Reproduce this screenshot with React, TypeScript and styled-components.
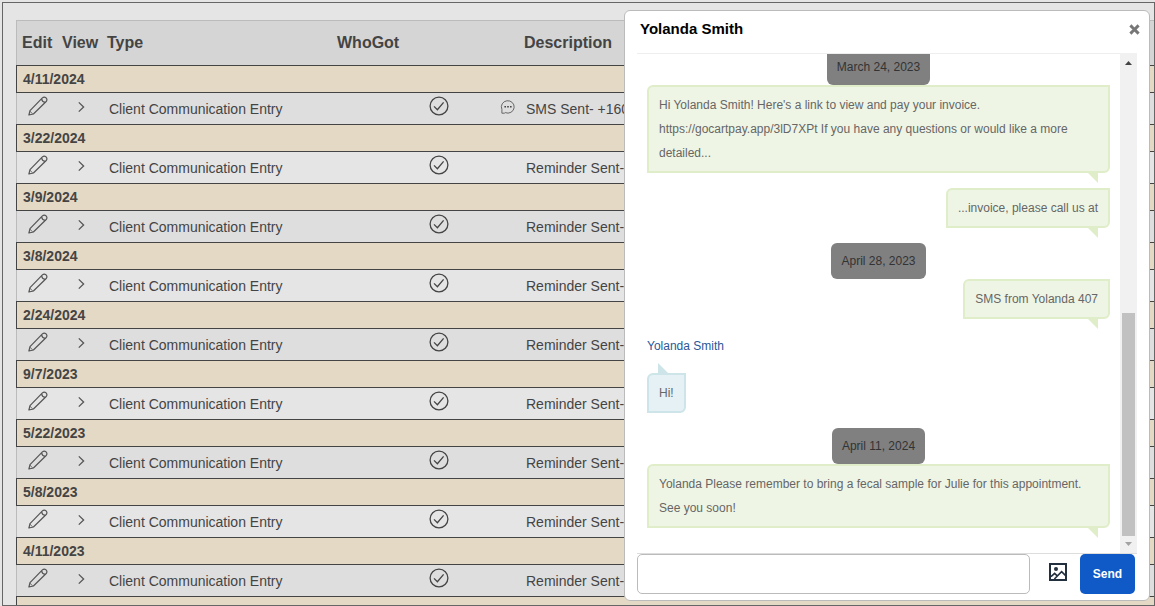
import React from "react";
import styled, { createGlobalStyle } from "styled-components";

const GlobalStyle = createGlobalStyle`
  *, *::before, *::after { box-sizing: border-box; }
  html, body { margin: 0; padding: 0; }
  body {
    background: #e5e5e5;
    color: #444;
    font-family: "Liberation Sans", Arial, sans-serif;
    font-size: 14px;
    overflow: hidden;
  }
  button, input { font-family: inherit; }
`;

const Page = styled.div`
  display: flex;
  height: 100vh;
  padding: 2px 0 0 2px;
`;

const Frame = styled.main`
  flex: 1;
  min-width: 0;
  overflow: hidden;
  border: 1px solid #666;
  padding: 17px 0 0 13px;
`;

const HistoryTable = styled.table`
  width: 100%;
  table-layout: fixed;
  border-collapse: separate;
  border-spacing: 0;
`;

const Column = styled.col<{ $width?: number }>`
  width: ${(p) => (p.$width ? `${p.$width}px` : "auto")};
`;

const HeadCell = styled.th`
  height: 45px;
  padding: 0 5px;
  border-top: 1px solid #bbb;
  background: #d5d5d5;
  font-size: 16px;
  line-height: 20px;
  text-align: left;
  white-space: nowrap;

  &:first-child { border-left: 1px solid #bbb; }
`;

const DateCell = styled.th`
  height: 28px;
  padding: 0 6px;
  border: 1px solid #444;
  border-right: 0;
  background: #e4d9c4;
  font-size: 14px;
  line-height: 16px;
  text-align: left;
`;

const EntryRow = styled.tr<{ $shaded: boolean }>`
  background: ${(p) => (p.$shaded ? "#dedede" : "#e5e5e5")};
`;

const EntryCell = styled.td`
  height: 31px;
  padding: 1px 7px 0;
  line-height: 16px;
  white-space: nowrap;
  overflow: hidden;
`;

const IconCell = styled.td<{ $align?: string; $pad?: string }>`
  height: 31px;
  padding: ${(p) => p.$pad ?? "3px 0 0"};
  line-height: 0;
  text-align: ${(p) => p.$align ?? "center"};
  vertical-align: top;

  &:first-child { border-left: 1px solid #bbb; }
`;

const IconButton = styled.button`
  padding: 0;
  border: 0;
  background: none;
  color: inherit;
  line-height: 0;
  cursor: pointer;
`;

const Dialog = styled.section`
  position: fixed;
  top: 10px;
  right: 5px;
  bottom: 5px;
  width: 526px;
  max-width: calc(100vw - 10px);
  display: flex;
  flex-direction: column;
  padding: 0 12px 6px;
  border: 1px solid #bbb;
  border-radius: 6px;
  background: #fff;
  font-size: 12px;
`;

const DialogHeader = styled.header`
  display: flex;
  align-items: center;
  justify-content: space-between;
  height: 42px;
  padding: 0 0 6px 3px;
  margin-right: -3px;
`;

const DialogTitle = styled.h2`
  margin: 0;
  color: #000;
  font-size: 15px;
  line-height: 20px;
`;

const Conversation = styled.div`
  flex: 1;
  min-height: 0;
  display: flex;
  border-top: 1px solid #eee;
  border-bottom: 1px solid #ddd;
`;

const Messages = styled.div`
  flex: 1;
  min-width: 0;
  overflow: hidden;
  display: flex;
  flex-direction: column;
  justify-content: flex-end;
  align-items: flex-end;
  padding: 0 10px 10px;
  color: #666;
  line-height: 24px;
`;

const DayPill = styled.div`
  flex: none;
  align-self: center;
  padding: 6px 10px;
  border-radius: 6px;
  background: #808080;
  color: #333;
`;

const Bubble = styled.div<{ $incoming?: boolean }>`
  flex: none;
  position: relative;
  align-self: ${(p) => (p.$incoming ? "flex-start" : "flex-end")};
  margin-bottom: 15px;
  padding: 6px 10px;
  border: 2px solid ${(p) => (p.$incoming ? "#cde4e8" : "#dfedc9")};
  border-radius: 6px 0;
  background: ${(p) => (p.$incoming ? "#e5f1f4" : "#eff5e5")};

  &::after {
    content: "";
    position: absolute;
    width: 10px;
    height: 10px;
    background: ${(p) => (p.$incoming ? "#cde4e8" : "#dfedc9")};
    ${(p) =>
      p.$incoming
        ? "left: 9px; top: -12px; clip-path: polygon(0 0, 100% 100%, 0 100%);"
        : "right: 10px; bottom: -12px; clip-path: polygon(0 0, 100% 0, 100% 100%);"}
  }
`;

const Sender = styled.div`
  flex: none;
  align-self: flex-start;
  margin-bottom: 15px;
  color: #2b5797;
`;

const ScrollTrack = styled.div`
  width: 17px;
  margin-top: -1px;
  display: flex;
  flex-direction: column;
  align-items: center;
  background: #f1f1f1;
`;

const ScrollArrow = styled.svg`
  flex: none;
  width: 17px;
  height: 17px;
`;

const ScrollSpace = styled.div`
  flex: 243;
`;

const ScrollThumb = styled.div`
  flex: 223;
  width: 13px;
  background: #c1c1c1;
`;

const Composer = styled.form`
  display: flex;
  align-items: center;
  height: 40px;
  padding-right: 2px;
`;

const MessageInput = styled.input`
  flex: 1;
  min-width: 0;
  height: 40px;
  margin-right: 19px;
  padding: 0 10px;
  border: 1px solid #bbb;
  border-radius: 5px;
  background: #fff;
  font-size: 12px;
`;

const AttachButton = styled(IconButton)`
  margin-bottom: 4px;
`;

const SendButton = styled.button`
  width: 55px;
  height: 40px;
  margin-left: 13px;
  padding: 0;
  border: 0;
  border-radius: 5px;
  background: #0f5ac6;
  color: #fff;
  font-size: 12px;
  font-weight: bold;
  cursor: pointer;
`;

const PencilIcon = () => (
  <svg width="20" height="20" viewBox="0 0 20 20" fill="none" stroke="#555" strokeWidth="1.2" strokeLinejoin="round">
    <path d="M0.9 19 L2 14.6 L14.4 1.9 Q16.2 0.3 18.1 1.9 Q19.7 3.8 18.2 5.5 L5.4 18 Z" />
    <path d="M13.6 2.8 Q14 5.8 17.2 6.4" />
    <path d="M1.9 15.2 L4.8 18" strokeWidth="0.8" />
  </svg>
);

const ChevronIcon = () => (
  <svg width="8" height="12" viewBox="0 0 8 12" fill="none" stroke="#555" strokeWidth="1.3">
    <path d="M0.8 1.4 L5.6 6 L0.8 10.6" />
  </svg>
);

const CheckIcon = () => (
  <svg width="20" height="20" viewBox="0 0 20 20" fill="none" stroke="#444" strokeWidth="1.3">
    <circle cx="10" cy="10" r="8.9" />
    <path d="M5 10.4 L8.4 13.7 L14.6 6.3" />
  </svg>
);

const ChatIcon = () => (
  <svg width="16" height="16" viewBox="0 0 16 16" fill="none" stroke="#666" strokeWidth="1">
    <path d="M1.9 14.2 V10.4 A6.4 6.2 0 1 1 5.2 13.6 L4.4 14.2 Z" />
    <path d="M4.4 7.8 H6 M7.2 7.8 H8.8 M10 7.8 H11.6" stroke="#444" strokeWidth="1.5" />
  </svg>
);

const CloseIcon = () => (
  <svg width="11" height="11" viewBox="0 0 11 11" stroke="#777" strokeWidth="3" strokeLinecap="butt">
    <path d="M1.4 1.4 L9.6 9.6 M9.6 1.4 L1.4 9.6" />
  </svg>
);

const ImageIcon = () => (
  <svg width="18" height="18" viewBox="0 0 18 18" fill="none" stroke="#222f3e" strokeWidth="2">
    <rect x="1" y="1" width="16" height="16" />
    <circle cx="7" cy="6" r="2" fill="#222f3e" stroke="none" />
    <path d="M2 13.6 L5.6 10.3 L8 12.6 M5.4 16 L12.6 8.6 L16.4 12.4" strokeWidth="1.6" />
  </svg>
);

const entries = [
  { date: "4/11/2024", text: "SMS Sent- +160", sms: true },
  { date: "3/22/2024", text: "Reminder Sent-" },
  { date: "3/9/2024", text: "Reminder Sent-" },
  { date: "3/8/2024", text: "Reminder Sent-" },
  { date: "2/24/2024", text: "Reminder Sent-" },
  { date: "9/7/2023", text: "Reminder Sent-" },
  { date: "5/22/2023", text: "Reminder Sent-" },
  { date: "5/8/2023", text: "Reminder Sent-" },
  { date: "4/11/2023", text: "Reminder Sent-" },
];

export default function App() {
  return (
    <>
      <GlobalStyle />
      <Page>
        <Frame>
          <HistoryTable>
            <colgroup>
              <Column $width={41} />
              <Column $width={45} />
              <Column $width={230} />
              <Column $width={158} />
              <Column $width={29} />
              <Column />
            </colgroup>
            <thead>
              <tr>
                <HeadCell>Edit</HeadCell>
                <HeadCell>View</HeadCell>
                <HeadCell>Type</HeadCell>
                <HeadCell>WhoGot</HeadCell>
                <HeadCell />
                <HeadCell>Description</HeadCell>
              </tr>
            </thead>
            <tbody>
              {entries.map((entry, i) => (
                <React.Fragment key={entry.date}>
                  <tr>
                    <DateCell colSpan={6}>{entry.date}</DateCell>
                  </tr>
                  <EntryRow $shaded={i % 2 === 0}>
                    <IconCell $pad="3px 0 0 2px">
                      <IconButton aria-label="Edit entry"><PencilIcon /></IconButton>
                    </IconCell>
                    <IconCell $pad="8px 0 0 4px">
                      <IconButton aria-label="View entry"><ChevronIcon /></IconButton>
                    </IconCell>
                    <EntryCell>Client Communication Entry</EntryCell>
                    <IconCell $align="right" $pad="3px 41px 0 0"><CheckIcon /></IconCell>
                    <IconCell $pad="6px 0 0 6px">{entry.sms && <ChatIcon />}</IconCell>
                    <EntryCell>{entry.text}</EntryCell>
                  </EntryRow>
                </React.Fragment>
              ))}
              <tr>
                <DateCell colSpan={6} />
              </tr>
            </tbody>
          </HistoryTable>
        </Frame>

        <Dialog role="dialog" aria-labelledby="chat-title">
          <DialogHeader>
            <DialogTitle id="chat-title">Yolanda Smith</DialogTitle>
            <IconButton aria-label="Close"><CloseIcon /></IconButton>
          </DialogHeader>
          <Conversation>
            <Messages>
              <DayPill>March 24, 2023</DayPill>
              <Bubble>
                Hi Yolanda Smith! Here's a link to view and pay your invoice. https://gocartpay.app/3lD7XPt If
                you have any questions or would like a more detailed...
              </Bubble>
              <Bubble>...invoice, please call us at</Bubble>
              <DayPill>April 28, 2023</DayPill>
              <Bubble>SMS from Yolanda 407</Bubble>
              <Sender>Yolanda Smith</Sender>
              <Bubble $incoming>Hi!</Bubble>
              <DayPill>April 11, 2024</DayPill>
              <Bubble>
                Yolanda Please remember to bring a fecal sample for Julie for this appointment. See you soon!
              </Bubble>
            </Messages>
            <ScrollTrack aria-hidden="true">
              <ScrollArrow viewBox="0 0 17 17"><path d="M5 12 L8.5 8 L12 12 Z" fill="#444" /></ScrollArrow>
              <ScrollSpace />
              <ScrollThumb />
              <ScrollArrow viewBox="0 0 17 17"><path d="M5 6 L8.5 10 L12 6 Z" fill="#a3a3a3" /></ScrollArrow>
            </ScrollTrack>
          </Conversation>
          <Composer onSubmit={(e) => e.preventDefault()}>
            <MessageInput type="text" aria-label="Message" />
            <AttachButton type="button" aria-label="Attach image"><ImageIcon /></AttachButton>
            <SendButton type="submit">Send</SendButton>
          </Composer>
        </Dialog>
      </Page>
    </>
  );
}
